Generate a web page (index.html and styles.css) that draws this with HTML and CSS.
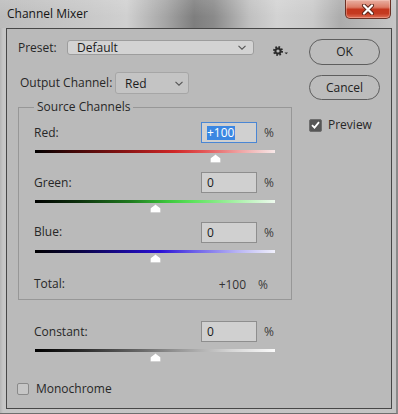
FILE: index.html
```html
<!doctype html>
<html>
<head>
<meta charset="utf-8">
<title>Channel Mixer</title>
<link rel="stylesheet" href="styles.css">
</head>
<body>
<div class="window">
	<div class="titlebar">
		<span class="title">Channel Mixer</span>
		<div class="close">
			<svg width="14" height="11" viewBox="0 0 14 11"><path d="M3 1.5L11 9.5M11 1.5L3 9.5" stroke="#5a2418" stroke-width="4" stroke-linecap="round"/><path d="M3 1.5L11 9.5M11 1.5L3 9.5" stroke="#fff" stroke-width="2.2" stroke-linecap="round"/></svg>
		</div>
	</div>
	<div class="panel">
		<div class="main">
			<div class="row presetRow">
				<span class="lbl presetLbl">Preset:</span>
				<div class="select presetSel">
					<span>Default</span>
					<svg class="chev" width="8" height="5" viewBox="0 0 8 5"><path d="M0.5 0.8L4 4.2L7.5 0.8" fill="none" stroke="#555" stroke-width="1.1"/></svg>
				</div>
				<svg class="gear" width="16" height="12" viewBox="0 0 16 12">
					<circle cx="5" cy="6" r="4" fill="none" stroke="#2a2a2a" stroke-width="2" stroke-dasharray="1.6 1.54"/>
					<circle cx="5" cy="6" r="2.6" fill="none" stroke="#2a2a2a" stroke-width="2"/>
					<path d="M11.5 7.5H15L13.25 9.3Z" fill="#2a2a2a"/>
				</svg>
			</div>
			<div class="row outputRow">
				<span class="lbl outputLbl">Output Channel:</span>
				<div class="select outputSel">
					<span>Red</span>
					<svg class="chev" width="8" height="5" viewBox="0 0 8 5"><path d="M0.5 0.8L4 4.2L7.5 0.8" fill="none" stroke="#555" stroke-width="1.1"/></svg>
				</div>
			</div>
			<fieldset class="group">
				<legend>Source Channels</legend>
				<div class="chan">
					<div class="chanHead"><span class="lbl">Red:</span><div class="field active"><span class="hl">+100</span></div><span class="pct">%</span></div>
					<div class="track red"><svg class="thumb" style="left:75%" width="11" height="9" viewBox="0 0 11 9"><path d="M5.5 0.3L10.7 4.2V8.7H0.3V4.2Z" fill="#fff" stroke="#a8a8a8" stroke-width="0.5"/></svg></div>
				</div>
				<div class="chan">
					<div class="chanHead"><span class="lbl">Green:</span><div class="field">0</div><span class="pct">%</span></div>
					<div class="track green"><svg class="thumb" style="left:50%" width="11" height="9" viewBox="0 0 11 9"><path d="M5.5 0.3L10.7 4.2V8.7H0.3V4.2Z" fill="#fff" stroke="#a8a8a8" stroke-width="0.5"/></svg></div>
				</div>
				<div class="chan">
					<div class="chanHead"><span class="lbl">Blue:</span><div class="field">0</div><span class="pct">%</span></div>
					<div class="track blue"><svg class="thumb" style="left:50%" width="11" height="9" viewBox="0 0 11 9"><path d="M5.5 0.3L10.7 4.2V8.7H0.3V4.2Z" fill="#fff" stroke="#a8a8a8" stroke-width="0.5"/></svg></div>
				</div>
				<div class="total"><span class="lbl">Total:</span><span class="tval">+100</span><span class="tpct">%</span></div>
			</fieldset>
			<div class="chan constant">
				<div class="chanHead"><span class="lbl">Constant:</span><div class="field">0</div><span class="pct">%</span></div>
				<div class="track grey"><svg class="thumb" style="left:50%" width="11" height="9" viewBox="0 0 11 9"><path d="M5.5 0.3L10.7 4.2V8.7H0.3V4.2Z" fill="#fff" stroke="#a8a8a8" stroke-width="0.5"/></svg></div>
			</div>
			<div class="check mono"><span class="box"></span><span>Monochrome</span></div>
		</div>
		<div class="side">
			<div class="btn">OK</div>
			<div class="btn cancel">Cancel</div>
			<div class="check preview">
				<span class="box on"><svg width="9" height="8" viewBox="0 0 9 8"><path d="M1 4.2L3.5 6.6L8 1.2" fill="none" stroke="#fff" stroke-width="1.8"/></svg></span>
				<span>Preview</span>
			</div>
		</div>
	</div>
</div>
</body>
</html>
```

FILE: styles.css
```css
*{margin:0;padding:0;box-sizing:border-box}
body{width:398px;height:414px;overflow:hidden;background:#c4c4c4;font-family:"Open Sans","DejaVu Sans",sans-serif;font-size:12px;color:#272727}

/* window frame */
.window{display:flex;flex-direction:column;width:398px;height:414px;padding:0 4px 4px 6px;border-right:2px solid #8a8a8a;border-bottom:1px solid #6e6e6e;background:linear-gradient(to right,#b4b4b4 0,#c6c6c6 3px,#c4c4c4 100%)}
.titlebar{position:relative;display:flex;align-items:center;height:28px;margin:0 -4px 0 -6px;padding-left:7px;background:linear-gradient(to bottom,rgba(255,255,255,.12),rgba(255,255,255,0) 60%),linear-gradient(90deg,#bcbcbc 0,#c8c8c8 22%,#d0d0d0 32%,#a4a4a4 42%,#7e7e7e 49%,#8a8a8a 54%,#c0c0c0 63%,#d3d3d3 70%,#cacaca 79%,#acacac 86%,#c6c6c6 100%)}
.title{font-size:12px;color:#141414;line-height:16px}
.close{position:absolute;top:0;left:345px;width:46px;height:19px;display:flex;align-items:center;justify-content:center;border:1px solid #6a3024;border-top:0;border-radius:0 0 5px 5px;background:linear-gradient(to bottom,#e9b0a2 0,#dc7c66 40%,#c4361d 52%,#c43a20 75%,#df6f57 100%);box-shadow:inset 0 0 0 1px rgba(255,220,210,.35)}

.panel{flex:1;display:flex;border:1px solid #474747;background:#bababa}
.main{width:274px;margin-left:11px;padding-top:11px}
.side{width:71px;margin-left:17px;padding-top:10px}

.row{display:flex;align-items:center}
.lbl{line-height:16px;white-space:nowrap}
.presetRow{height:15px}
.presetLbl{width:49px}
.select{display:flex;align-items:center;justify-content:space-between;border:1px solid #9d9d9d;border-radius:3px;color:#1c1c1c}
.presetSel{width:187px;height:15px;padding:0 7px 0 9px;background:#d3d3d3}
.outputRow{margin-top:17px;height:22px}
.outputLbl{width:95px;margin-left:2px}
.outputSel{width:74px;height:22px;padding:0 5px 0 9px;background:#c4c4c4;border-color:#a6a6a6}
.gear{margin:6px 0 0 19px}

/* source channels box */
.group{margin-top:5px;padding:7px 15px 7px 15px;border:1px solid #979797;min-width:0}
.group legend{padding:0 3px;line-height:16px}
.chan{height:50px}
.chan + .chan{height:49.5px}
.chanHead{display:flex;align-items:center;height:21px}
.chanHead .lbl{flex:1}
.field{width:56px;height:21px;padding-left:5px;line-height:19px;border:1px solid #8e8e8e;background:#d0d0d0;color:#1a1a1a}
.field.active{border-color:#4a86d4;padding-left:5px}
.hl{display:inline-block;background:#3b87e2;color:#fff;line-height:14px;padding:0 1px 0 0}
.pct{width:12px;margin-left:7px;color:#3a3a3a}
.track{position:relative;width:240px;height:3px;margin:7px 0 0 1px}
.thumb{position:absolute;top:4px;margin-left:-5px}
.red{background:linear-gradient(90deg,#000 0,#3a0707 14%,#8a1414 38%,#cf2727 58%,#e35454 70%,#efa1a1 85%,#f7e8e8 100%)}
.green{background:linear-gradient(90deg,#000 0,#0d300d 18%,#1f7a1f 40%,#3cc63c 55%,#5ee35e 66%,#a8f0a8 84%,#eefaee 100%)}
.blue{background:linear-gradient(90deg,#000 0,#0a0440 18%,#1a0a9a 38%,#2a10d4 52%,#6a5ee8 66%,#b6b2f4 84%,#f0f0fc 100%)}
.grey{background:linear-gradient(90deg,#000 0,#2c2c2c 20%,#6a6a6a 45%,#9d9d9d 62%,#d6d6d6 82%,#fafafa 100%)}
.total{display:flex;align-items:center;height:16px;margin-top:5px}
.total .lbl{flex:1}
.tval{color:#333}
.tpct{margin:0 8px 0 12px;color:#3a3a3a}
.constant{margin:21px 0 0 16px;width:242px}

/* check boxes */
.check{display:flex;align-items:center;line-height:16px}
.box{display:flex;align-items:center;justify-content:center;width:12px;height:12px;border:1px solid #8a8a8a;border-radius:2px;background:#c6c6c6}
.box.on{width:13px;height:13px;background:#565656;border-color:#6e6e6e}
.mono{margin:10px 0 0 -1px}
.mono .box{margin-right:7px}
.preview{margin-top:17px}
.preview .box{margin-right:6px}

.btn{height:26px;line-height:24px;text-align:center;border:1px solid #5e5e5e;border-radius:13px;background:#bcbcbc;color:#222}
.cancel{margin-top:10px;height:25px;line-height:23px}
```
